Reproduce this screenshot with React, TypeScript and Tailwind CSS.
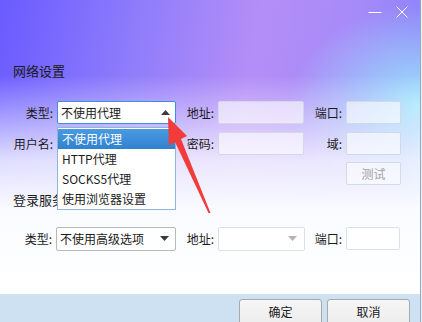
import React from 'react';

const font = { fontFamily: '"Noto Sans CJK SC", "Noto Sans", sans-serif' };

function Label({ text, w }: { text: string; w: string }) {
  return <div className={`${w} shrink-0 text-right pr-[4px] text-[12px] text-[#1a1a1a]`}>{text}</div>;
}

function Input({ w, light }: { w: string; light?: boolean }) {
  return (
    <div
      className={`${w} h-[23px] shrink-0 rounded-[2px] border ${
        light ? 'bg-white border-[#dde1e7]' : 'bg-white/60 border-[#d3d8e6]'
      }`}
    />
  );
}

function Tri({ up, color }: { up?: boolean; color: string }) {
  return (
    <svg width="9" height="5" viewBox="0 0 9 5">
      <path d={up ? 'M0 5 L4.5 0 L9 5 Z' : 'M0 0 L9 0 L4.5 5 Z'} fill={color} />
    </svg>
  );
}

const proxyItems = ['不使用代理', 'HTTP代理', 'SOCKS5代理', '使用浏览器设置'];

export default function App() {
  return (
    <div className="w-[422px] h-[322px] relative overflow-hidden flex bg-[#dfeaf5]" style={font}>
      <div className="w-[421px] h-full border-r border-[#9aa9bb] flex flex-col bg-[linear-gradient(180deg,rgba(255,255,255,0)_0px,rgba(255,255,255,0)_75px,rgba(250,252,255,0.8)_160px,#f9fbff_210px,#ffffff_280px),radial-gradient(ellipse_130px_100px_at_100%_105px,#9fe6fc_0%,rgba(159,230,252,0)_100%),linear-gradient(100deg,#6a5bff_0%,#8f7dfb_30%,#b48ef7_55%,#a68af8_75%,#8e84f9_90%,#9cc8fb_100%)]">
        {/* title bar */}
        <div className="h-[30px] flex justify-end items-start">
          <svg width="14" height="24" viewBox="0 0 14 24" className="mr-[14px]">
            <line x1="0.5" y1="12.5" x2="13.5" y2="12.5" stroke="white" strokeWidth="1" />
          </svg>
          <svg width="12" height="24" viewBox="0 0 12 24" className="mr-[12px]">
            <line x1="0.5" y1="6.5" x2="11.5" y2="17.5" stroke="white" strokeWidth="1" />
            <line x1="11.5" y1="6.5" x2="0.5" y2="17.5" stroke="white" strokeWidth="1" />
          </svg>
        </div>

        <div className="pl-[13px] mt-[32px] h-[18px] leading-[18px] text-[13px] text-[#1a1a1a]">网络设置</div>

        {/* row 1 */}
        <div className="mt-[21px] flex items-center h-[23px]">
          <Label text="类型:" w="w-[57px]" />
          <div className="w-[119px] h-[23px] shrink-0 bg-white border border-[#3c8ede] rounded-[2px] flex items-center justify-between pl-[3px] pr-[5px] text-[12px] text-[#1a1a1a]">
            <span>不使用代理</span>
            <Tri up color="#3a3a3a" />
          </div>
          <Label text="地址:" w="w-[42px]" />
          <Input w="w-[86px]" />
          <Label text="端口:" w="w-[42px]" />
          <Input w="w-[55px]" />
        </div>

        {/* row 2 */}
        <div className="mt-[8px] flex items-center h-[23px]">
          <Label text="用户名:" w="w-[57px]" />
          <Input w="w-[119px]" />
          <Label text="密码:" w="w-[42px]" />
          <Input w="w-[86px]" />
          <Label text="域:" w="w-[42px]" />
          <Input w="w-[55px]" />
        </div>

        {/* row 3 */}
        <div className="mt-[7px] flex h-[23px] pl-[346px]">
          <div className="w-[55px] h-[23px] rounded-[2px] border border-[#d6dbe3] bg-white/50 flex items-center justify-center text-[12px] text-[#a3a3a3]">
            测试
          </div>
        </div>

        <div className="pl-[13px] mt-[6px] h-[18px] leading-[18px] text-[13px] text-[#1a1a1a]">登录服务器</div>

        {/* row 4 */}
        <div className="mt-[18px] flex items-center h-[23px]">
          <Label text="类型:" w="w-[56px]" />
          <div className="w-[120px] h-[24px] shrink-0 bg-white border border-[#b9b9b9] rounded-[2px] flex items-center justify-between pl-[3px] pr-[6px] text-[12px] text-[#1a1a1a]">
            <span>不使用高级选项</span>
            <Tri color="#3a3a3a" />
          </div>
          <Label text="地址:" w="w-[42px]" />
          <div className="w-[87px] h-[24px] shrink-0 bg-white border border-[#dcdfe4] rounded-[2px] flex items-center justify-end pr-[7px]">
            <Tri color="#b4b4b4" />
          </div>
          <Label text="端口:" w="w-[41px]" />
          <Input w="w-[54px]" light />
        </div>

        <div className="flex-1" />

        {/* bottom bar */}
        <div className="h-[28px] bg-[#cde1f3] flex items-start justify-end pt-[5px] pr-[10px] gap-[5px]">
          <div className="w-[83px] h-[28px] rounded-t-[3px] border border-[#a9a9a9] bg-[linear-gradient(#f6f6f6,#ececec)] flex justify-center pt-[3px] text-[12px] text-[#1a1a1a]">
            确定
          </div>
          <div className="w-[83px] h-[28px] rounded-t-[3px] border border-[#a9a9a9] bg-[linear-gradient(#f6f6f6,#ececec)] flex justify-center pt-[3px] text-[12px] text-[#1a1a1a]">
            取消
          </div>
        </div>
      </div>
      <div className="flex-1 bg-[#e6eef8]" />

      {/* open dropdown list */}
      <div className="absolute left-[57px] top-[127px] w-[119px] h-[83px] bg-white border border-[#8fb3d9] py-[1px] text-[12px]">
        {proxyItems.map((item, i) => (
          <div
            key={item}
            className={`h-[20px] leading-[20px] pl-[4px] ${
              i === 0 ? 'bg-[linear-gradient(#4a9ae0,#2f82cf)] text-white' : 'text-[#1a1a1a]'
            }`}
          >
            {item}
          </div>
        ))}
      </div>

      {/* red annotation arrow */}
      <svg className="absolute left-0 top-0 pointer-events-none" width="422" height="322" viewBox="0 0 422 322">
        <polygon
          points="168,117 187,136 181,139 210.5,213 208.5,213 175,142 169,146"
          fill="#f23b3b"
        />
      </svg>
    </div>
  );
}
